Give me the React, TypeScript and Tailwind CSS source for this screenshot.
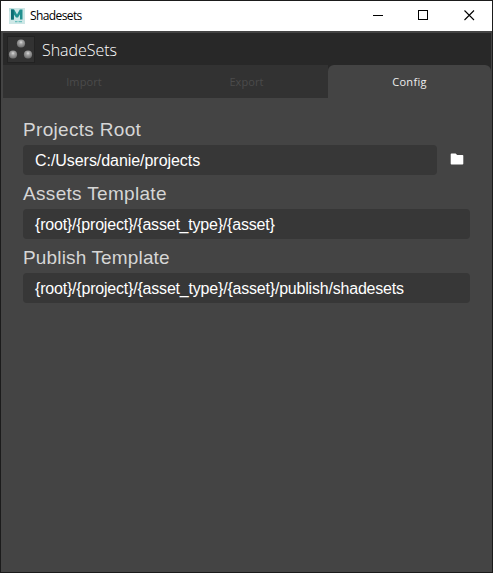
import React from 'react';

function MayaIcon() {
  return (
    <svg width="16" height="16" viewBox="0 0 16 16" className="shrink-0">
      <rect width="16" height="16" fill="#cde7e6" />
      <path d="M0 16V4L4 0H0Z" fill="#bcdfdd" />
      <path d="M2 1.500H5.200L8 6.400L10.800 1.500H13.500V11.500H11V6.200L9 9.600H7L4.800 6.200V11.500H2Z" fill="#20908f" />
      <path d="M2 1.500H4.800V11.500H2Z" fill="#0d6d73" />
      <path d="M6 13.600H8.500M9.500 13.600H13" stroke="#6bbfbd" strokeWidth="1.200" />
    </svg>
  );
}

function SpheresIcon() {
  const balls = [
    [13, 6.5],
    [5, 17.5],
    [20, 17.5],
  ];
  return (
    <svg width="26" height="25" viewBox="0 0 26 25" className="block">
      <defs>
        <radialGradient id="ball" cx="0.5" cy="0.35" r="0.6">
          <stop offset="0" stopColor="#dedede" />
          <stop offset="0.35" stopColor="#a4a4a4" />
          <stop offset="1" stopColor="#707070" />
        </radialGradient>
      </defs>
      {balls.map(([x, y]) => (
        <circle key={x} cx={x} cy={y} r="4.1" fill="url(#ball)" />
      ))}
    </svg>
  );
}

function TitleBar() {
  return (
    <div className="flex h-[30px] shrink-0 items-center bg-white pl-2">
      <MayaIcon />
      <span className="ml-[5px] font-['Open_Sans',sans-serif] text-[12px] leading-none tracking-[-0.6px] text-black">
        Shadesets
      </span>
      <svg width="138" height="30" viewBox="0 0 138 30" className="ml-auto shrink-0" shapeRendering="crispEdges" fill="none" stroke="#000">
        <path d="M19 14.500H29" />
        <rect x="64.500" y="9.500" width="9" height="9" />
        <path d="M110.500 9.500L120 19M120 9.500L110.500 19" shapeRendering="auto" strokeWidth="1.100" />
      </svg>
    </div>
  );
}

type FieldProps = {
  label: string;
  value: string;
  labelClass: string;
  valueClass: string;
  browse?: boolean;
};

function Field({ label, value, labelClass, valueClass, browse = false }: FieldProps) {
  return (
    <div className="flex flex-col">
      <div className={`flex h-[34px] items-center pt-[3px] text-[19px] leading-none text-[#d6d6d6] ${labelClass}`}>{label}</div>
      <div className="flex items-center">
        <div className={`flex h-[30px] flex-1 items-center rounded-[4px] bg-[#373737] pl-3 pt-[2px] text-[16px] leading-none text-white ${valueClass}`}>
          {value}
        </div>
        {browse && (
          <div className="flex w-[33px] justify-end pb-[2px] pr-[6px]">
            <svg width="14" height="12" viewBox="0 0 14 12">
              <path d="M1.500 .5H5.600L7.200 2H12.500Q13.300 2 13.300 2.800V10.700Q13.300 11.500 12.500 11.500H1.500Q.7 11.500 .7 10.700V1.300Q.7 .5 1.500 .5Z" fill="#fff" />
            </svg>
          </div>
        )}
      </div>
    </div>
  );
}

export default function App() {
  return (
    <div className="flex h-[573px] w-[493px] flex-col border border-[#1b1b1b] bg-[#444444] font-['Liberation_Sans',Arial,sans-serif]">
      <TitleBar />
      <div className="ml-[2px] mr-[1px] mt-[2px] flex h-8 shrink-0 items-center bg-[#282828] pl-1">
        <div className="border border-[#222222] bg-[#323232]">
          <SpheresIcon />
        </div>
        <span className="ml-[7px] pt-px font-['Open_Sans',sans-serif] text-[16px] font-light leading-none tracking-[-0.05px] text-white">
          ShadeSets
        </span>
      </div>
      <div className="ml-[2px] mr-[1px] flex h-[33px] shrink-0 bg-[#323232] font-['Open_Sans',sans-serif] text-[11px] leading-none text-[#4b4b4b]">
        <div className="flex w-[162px] items-center justify-center tracking-[0.1px]">Import</div>
        <div className="flex w-[163px] items-center justify-center tracking-[0.1px]">Export</div>
        <div className="flex-1 bg-[#282828]">
          <div className="flex h-full items-center justify-center rounded-t-[6px] bg-[#444444] tracking-[0.3px] text-[#eeeeee]">Config</div>
        </div>
      </div>
      <div className="flex flex-col px-[22px] pt-[13px]">
        <Field label="Projects Root" value="C:/Users/danie/projects" labelClass="tracking-[0.32px]" valueClass="tracking-[-0.05px]" browse />
        <Field label="Assets Template" value="{root}/{project}/{asset_type}/{asset}" labelClass="tracking-[0.32px]" valueClass="tracking-[-0.21px]" />
        <Field
          label="Publish Template"
          value="{root}/{project}/{asset_type}/{asset}/publish/shadesets"
          labelClass="tracking-[0.15px]"
          valueClass="tracking-[-0.2px]"
        />
      </div>
    </div>
  );
}
